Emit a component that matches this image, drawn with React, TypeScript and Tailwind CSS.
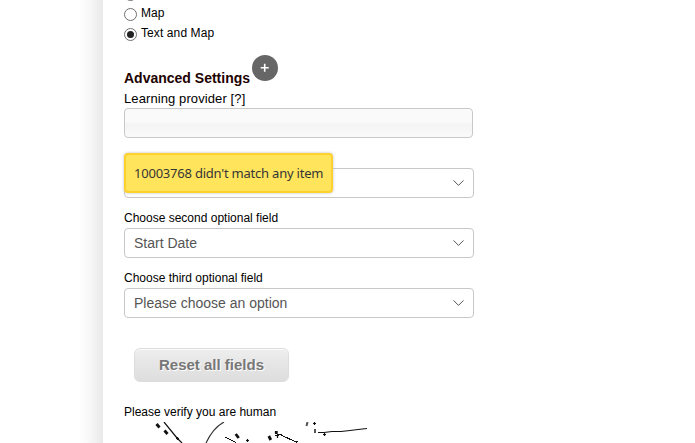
function Chevron() {
  return (
    <svg width="11" height="6" viewBox="0 0 11 6" fill="none" stroke="#555" strokeWidth="1">
      <path d="M.5 .4 5.5 5.4 10.5 .4" />
    </svg>
  );
}

function SelectBox({ value }: { value: string }) {
  return (
    <div className="flex h-[30px] w-[350px] items-center justify-between rounded border border-[#c8c8c8] bg-white pr-[9px] pl-[9px] text-sm text-[#555]">
      <span>{value}</span>
      <Chevron />
    </div>
  );
}

function Radio({ checked }: { checked?: boolean }) {
  return (
    <span className="mt-[3px] flex size-[13px] shrink-0 items-center justify-center rounded-full border border-[#707070] bg-white">
      {checked && <span className="size-[7px] rounded-full bg-[#222]" />}
    </span>
  );
}

function Captcha() {
  return (
    <svg className="block" width="250" height="21" viewBox="124 422 250 21" fill="none" stroke="#111" strokeWidth="1">
      <path d="M164 422 177 438 182 443" strokeWidth="1.2" />
      <path d="M206 443Q213 428 224 422" stroke="#333" strokeWidth="1.2" />
      <path d="M225 437.2 236 442.5M279 434 297 442.5" shapeRendering="crispEdges" />
      <path d="M318 432.5H324L332 431.5H341L350 430.5 358 429.5 367 428.5" strokeWidth="1.2" />
      <g strokeWidth="2.8">
        <path d="m156.5 424 3 3.5M164.5 430.5l3 3.5M235.7 434l3 4M268.8 436l2 4M276.3 431v3" />
      </g>
      <path d="M176 438.5h3M177.5 437v3M246 440.5h3M247.5 439v3M275 435.5h4M277.5 434v4M313 423.5h3M314.5 422v3M323 434.5h3M324.5 433v3M278 434.5h4M295 441.5h3" strokeWidth="1.2" />
      <path d="m307.5 422-1 4M315 429v4" strokeWidth="2" stroke="#555" />
    </svg>
  );
}

export default function App() {
  return (
    <div className="flex h-[443px] w-[695px] overflow-hidden bg-white font-['Liberation_Sans',Arial,sans-serif] text-xs text-black">
      <div className="w-[103px] shrink-0 bg-[linear-gradient(to_right,#fff_78px,#f9f9f9_88px,#f2f2f2_95px,#e8e8e8_103px)]" />
      <main className="flex w-[371px] flex-col pl-[21px]">
        <div className="flex h-[5px] items-end">
          <div className="mb-[4px] size-[13px] rounded-full border border-[#707070]" />
        </div>
        <div className="flex h-5 gap-[4px]">
          <Radio />
          <span className="leading-4 tracking-[0.1px]">Map</span>
        </div>
        <div className="flex h-5 gap-[4px]">
          <Radio checked />
          <span className="leading-4 tracking-[0.1px]">Text and Map</span>
        </div>
        <div className="mt-[9px] flex h-[36px] items-start">
          <h2 className="mt-[14px] w-[128px] text-sm leading-5 font-bold whitespace-nowrap text-[#210000]">Advanced Settings</h2>
          <div className="mt-px flex size-[26px] items-center justify-center rounded-full bg-[#666]">
            <svg width="10" height="10" viewBox="0 0 10 10" stroke="#fff" strokeWidth="1.6">
              <path d="M4.7 .8v8M.7 4.8h8" />
            </svg>
          </div>
        </div>
        <label className="h-[18px] text-[13px] leading-[18px] tracking-[0.1px]">Learning provider [?]</label>
        <div className="h-[30px] w-[349px] rounded border border-[#c8c8c8] bg-[linear-gradient(#fafafa_45%,#f4f4f4_55%,#fafafa)]" />
        <div className="relative mt-[30px]">
          <SelectBox value="" />
          <div className="absolute -top-[15px] left-0 flex h-[40px] w-[209px] items-center rounded border-2 border-[#ffd12f] bg-[#ffe45c] pt-0.5 pl-2 font-['Noto_Sans',sans-serif] text-[13px] tracking-[-0.22px] whitespace-nowrap text-[#363636] shadow-[0_0_3px_#bbb]">
            10003768 didn't match any item
          </div>
        </div>
        <label className="mt-[12px] h-[18px] leading-4">Choose second optional field</label>
        <SelectBox value="Start Date" />
        <label className="mt-[12px] h-[18px] leading-4">Choose third optional field</label>
        <SelectBox value="Please choose an option" />
        <button className="mt-[30px] ml-[10px] h-[34px] w-[155px] shrink-0 rounded-md border border-[#ddd] bg-linear-to-b from-[#eee] to-[#ddd] text-[15px] font-bold text-[#777] [text-shadow:1px_1px_0_#fff] shadow-[inset_0_1px_0_#fafafa]">
          Reset all fields
        </button>
        <p className="mt-[21px] h-[19px] leading-[18px]">Please verify you are human</p>
        <Captcha />
      </main>
    </div>
  );
}
